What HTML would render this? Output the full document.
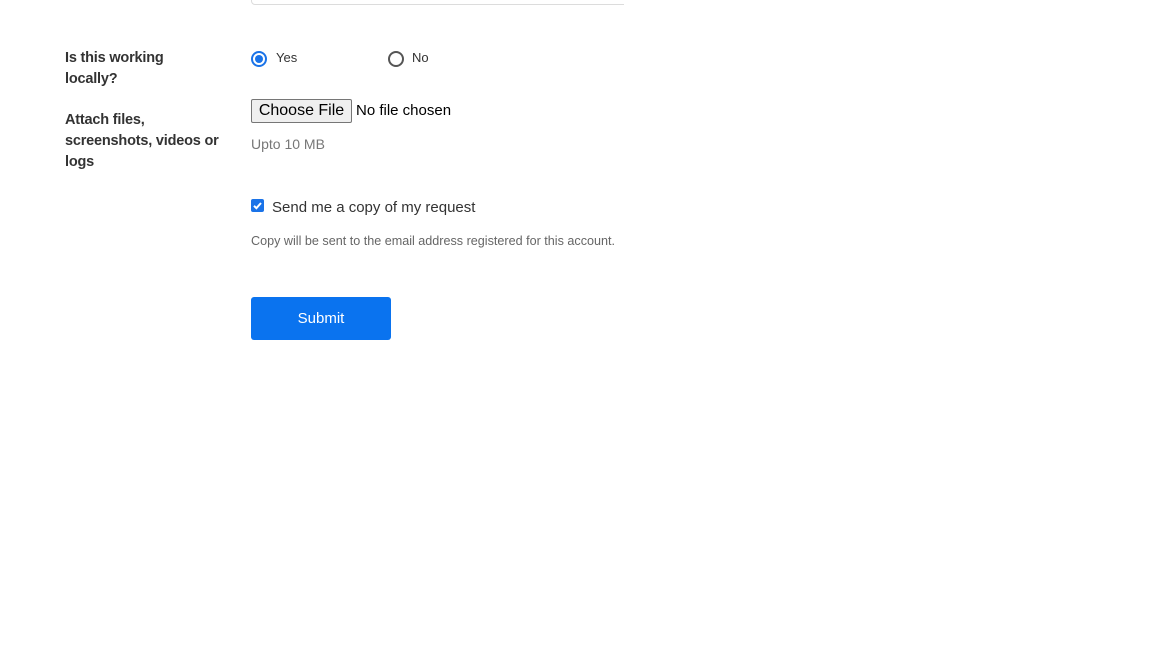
<!DOCTYPE html>
<html><head><meta charset="utf-8"><style>
body{margin:0;width:1152px;height:648px;background:#fff;position:relative;overflow:hidden;font-family:"Liberation Sans",sans-serif;}
.a{position:absolute;white-space:nowrap;}
.lbl{font-weight:bold;font-size:14.5px;color:#333;line-height:21px;letter-spacing:-0.2px}
.radio{width:12px;height:12px;border-radius:50%;border:2px solid #555;}
.radio.on{border-color:#1a73e8;}
.radio.on::after{content:"";position:absolute;left:2px;top:2px;width:8px;height:8px;border-radius:50%;background:#1a73e8;}
</style></head><body>
<div class="a" style="left:251px;top:0;width:373px;height:5px;overflow:hidden;">
<div style="position:absolute;left:0;top:-21px;width:400px;height:24px;border:1px solid #dcdcdc;border-radius:4px;"></div></div>
<div class="a lbl" style="left:65px;top:48px;">Is this working<br>locally?</div>
<div class="a lbl" style="left:65px;top:110px;">Attach files,<br>screenshots, videos or<br>logs</div>
<div class="a radio on" style="left:251px;top:51px;"></div>
<div class="a" style="left:276px;top:50px;font-size:13px;color:#333;">Yes</div>
<div class="a radio" style="left:388px;top:51px;"></div>
<div class="a" style="left:412px;top:50px;font-size:13px;color:#333;">No</div>
<div class="a" style="left:251px;top:99px;width:99px;height:22px;border:1px solid #767676;border-radius:2px;background:#efefef;font-size:16px;line-height:22px;text-align:center;color:#000;">Choose File</div>
<div class="a" style="left:356px;top:102px;font-size:15px;color:#000;">No file chosen</div>
<div class="a" style="left:251px;top:136px;font-size:14px;color:#777;">Upto 10 MB</div>
<div class="a" style="left:251px;top:199px;width:13px;height:13px;background:#1a73e8;border-radius:2px;">
<svg width="13" height="13" viewBox="0 0 13 13" style="display:block"><path d="M3 6.8 L5.4 9.2 L10 4" stroke="#fff" stroke-width="2" fill="none"/></svg></div>
<div class="a" style="left:272px;top:199px;font-size:15px;color:#333;">Send me a copy of my request</div>
<div class="a" style="left:251px;top:234px;font-size:12.6px;color:#666;">Copy will be sent to the email address registered for this account.</div>
<div class="a" style="left:251px;top:297px;width:140px;height:43px;background:#0a73ef;border-radius:3px;color:#fff;font-size:15px;line-height:43px;text-align:center;">Submit</div>
</body></html>
